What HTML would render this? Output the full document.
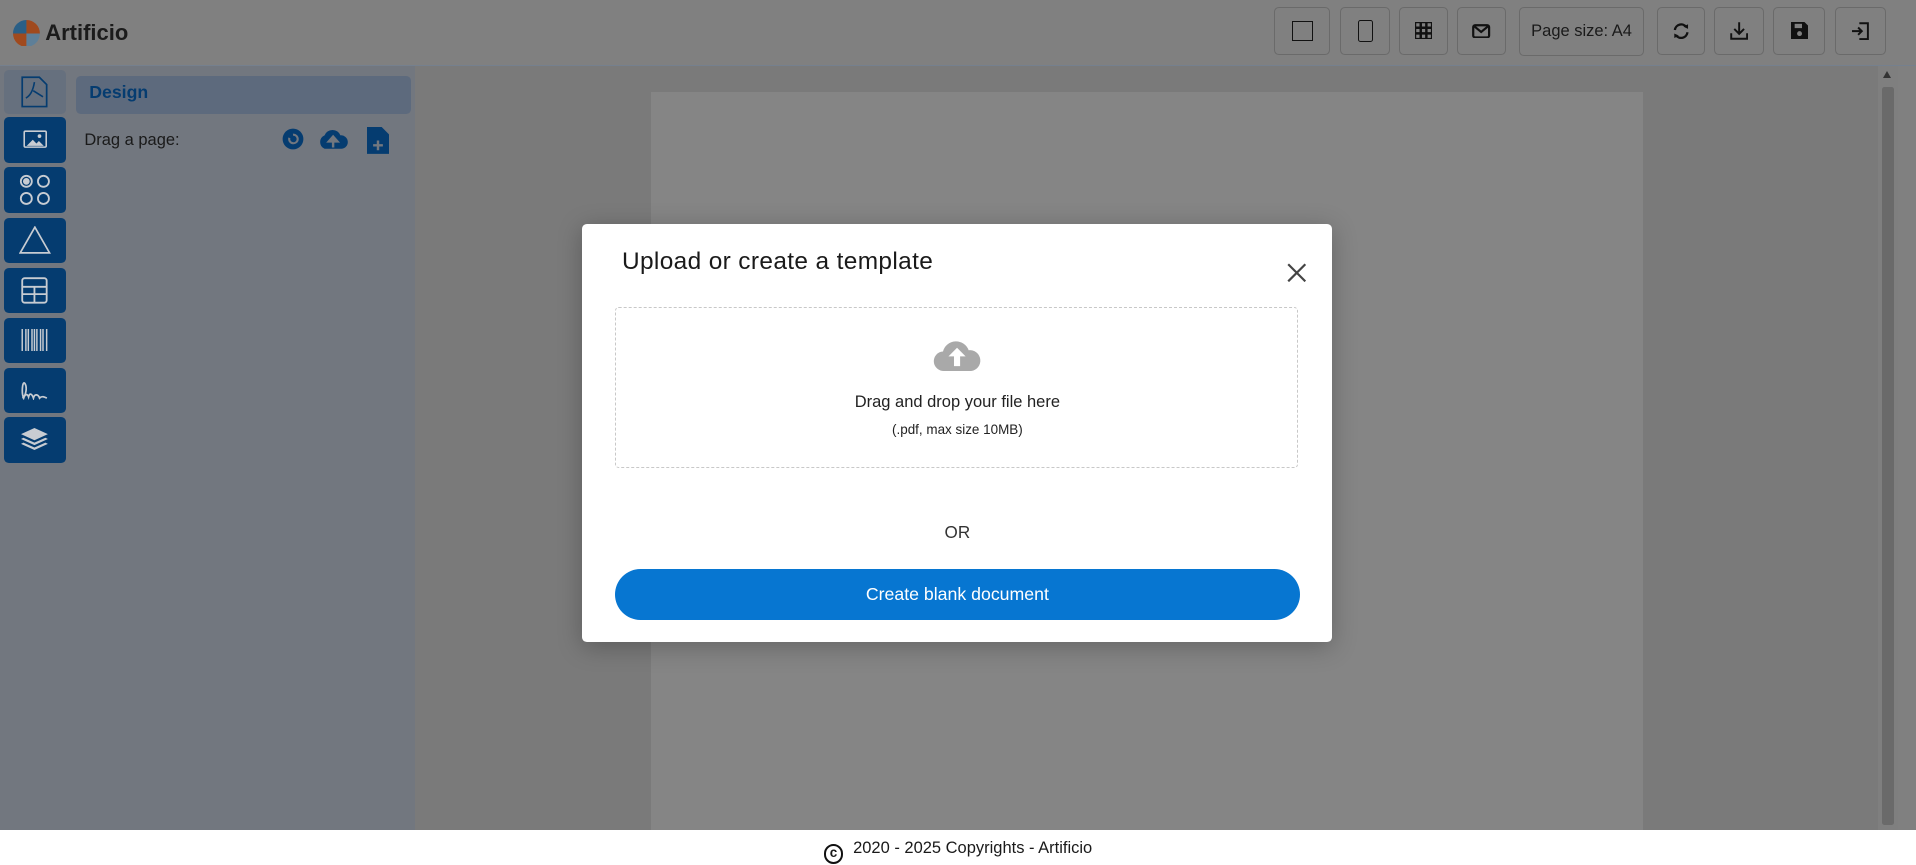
<!DOCTYPE html>
<html><head><meta charset="utf-8"><style>
html,body{margin:0;padding:0;width:1916px;height:865px;overflow:hidden;background:#fff;font-family:"Liberation Sans",sans-serif}
#w{zoom:1.22194;width:1568px;height:708px;position:relative}
.a{position:absolute}
.tb{position:absolute;top:6px;height:37px;border:1px solid #6a6a6a;border-radius:4px;background:#808080;display:flex;align-items:center;justify-content:center;color:#1a1a1a;font-size:13.5px}
.lb{position:absolute;left:3px;width:51px;height:37px;background:#053c70;border-radius:4px;display:flex;align-items:center;justify-content:center}
</style></head><body><div id="w">
<div class="a" style="left:0;top:0;width:1568px;height:53px;background:#808080;border-bottom:1px solid #75808e"></div>
<svg class="a" style="left:11px;top:16px" width="22" height="22" viewBox="0 0 22 22"><path d="M11 0A11 11 0 0 0 0 11H11Z" fill="#2a5f86"/><path d="M11 0A11 11 0 0 1 22 11H11Z" fill="#a04a1e"/><path d="M0 11A11 11 0 0 0 11 22V11Z" fill="#a04a1e"/><path d="M22 11A11 11 0 0 1 11 22V11Z" fill="#5e7f98"/></svg>
<div class="a" style="left:37px;top:16px;font-size:18px;font-weight:bold;color:#1b1b1b">Artificio</div>
<div class="tb" style="left:1043px;width:44px"><div style="width:15px;height:15px;border:1.5px solid #111"></div></div>
<div class="tb" style="left:1097px;width:39px"><div style="width:11px;height:17px;border:1.5px solid #111;border-radius:2px"></div></div>
<div class="tb" style="left:1145px;width:38px"><svg width="14" height="14"><path d="M0 0h14v14H0z M4.7 0v14 M9.3 0v14 M0 4.7h14 M0 9.3h14" stroke="#111" stroke-width="2" fill="none"/></svg></div>
<div class="tb" style="left:1192px;width:39px"><svg width="15" height="12"><rect x="1" y="1" width="13" height="10" rx="1.5" stroke="#111" stroke-width="1.8" fill="none"/><path d="M2 2l5.5 4.5L13 2" stroke="#111" stroke-width="1.8" fill="none"/></svg></div>
<div class="tb" style="left:1243px;width:101px;top:6px;height:38px">Page size: A4</div>
<div class="tb" style="left:1356px;width:38px"><svg width="15" height="15" viewBox="0 0 16 16"><path d="M2.5 7A5.5 5.5 0 0 1 12.5 4.5M13.5 9A5.5 5.5 0 0 1 3.5 11.5" stroke="#111" stroke-width="2" fill="none"/><path d="M10 4l4-2v4z M6 12l-4 2v-4z" fill="#111"/></svg></div>
<div class="tb" style="left:1403px;width:39px"><svg width="15" height="16"><path d="M7.5 1v9M3.5 6.5l4 4 4-4M1 10v4.5h13V10" stroke="#111" stroke-width="1.6" fill="none"/></svg></div>
<div class="tb" style="left:1451px;width:41px"><svg width="14" height="14"><path d="M0 0h11l3 3v11H0z" fill="#111"/><rect x="3" y="1.5" width="6" height="3.5" fill="#808080"/><circle cx="7" cy="9.5" r="2" fill="#808080"/></svg></div>
<div class="tb" style="left:1502px;width:40px"><svg width="14" height="15"><path d="M6 1h7v13H6M0 7.5h8M5 4.5l3 3-3 3" stroke="#111" stroke-width="1.6" fill="none"/></svg></div>

<div class="a" style="left:0;top:54px;width:340px;height:625px;background:#72777f"></div>
<div class="a" style="left:3px;top:57px;width:51px;height:36px;background:#66707e;border-radius:4px;display:flex;align-items:center;justify-content:center"><svg width="22" height="26"><path d="M1 1h14l6 6v18H1z" stroke="#053c70" stroke-width="1.4" fill="none"/><path d="M11 5c-1 6-3 11-7 13M10 12l8 5" stroke="#053c70" stroke-width="1.3" fill="none"/></svg></div>
<div class="a" style="left:62px;top:62px;width:274px;height:31px;background:#5d6a7d;border-radius:4px"></div>
<div class="a" style="left:73px;top:67px;font-size:14.5px;font-weight:bold;color:#053c70">Design</div>
<div class="a" style="left:69px;top:107px;font-size:13.5px;color:#1a1a1a">Drag a page:</div>
<svg class="a" style="left:231px;top:105px" width="18" height="18"><circle cx="9" cy="9" r="8.5" fill="#053c70"/><path d="M6 8a3.5 3.5 0 1 0 3-2.5" stroke="#72777f" stroke-width="1.7" fill="none"/></svg>
<svg class="a" style="left:259px;top:105px" width="28" height="18"><path d="M7 17a6 6 0 0 1 0-11 7 7 0 0 1 13 0 5 5 0 0 1 1 11z" fill="#053c70"/><path d="M14 16v-7M10.5 11l3.5-4 3.5 4z" stroke="#72777f" stroke-width="2" fill="#72777f"/></svg>
<svg class="a" style="left:300px;top:104px" width="18" height="22"><path d="M0 0h12l6 6v16H0z" fill="#053c70"/><path d="M9 11v8M5 15h8" stroke="#72777f" stroke-width="2"/></svg>

<div class="lb" style="top:96px"><svg width="20" height="16"><rect x="1" y="1" width="18" height="13" rx="1" stroke="#c8ccd2" stroke-width="1.3" fill="none"/><path d="M3 13l5-5 3 3 2-2 4 4z" fill="#c8ccd2"/><circle cx="13.5" cy="5" r="1.5" fill="#c8ccd2"/></svg></div>
<div class="lb" style="top:137px"><svg width="26" height="26" fill="none" stroke="#c8ccd2" stroke-width="1.5"><circle cx="6" cy="6" r="4.5"/><circle cx="6" cy="6" r="2" fill="#c8ccd2"/><circle cx="20" cy="6" r="4.5"/><circle cx="6" cy="20" r="4.5"/><circle cx="20" cy="20" r="4.5"/></svg></div>
<div class="lb" style="top:178px"><svg width="26" height="23"><path d="M13 1L1 22h24z" stroke="#c8ccd2" stroke-width="1.4" fill="none"/></svg></div>
<div class="lb" style="top:219px"><svg width="22" height="22"><rect x="1" y="1" width="20" height="20" rx="2" stroke="#c8ccd2" stroke-width="1.5" fill="none"/><path d="M1 8h20M1 14h20M11 8v13" stroke="#c8ccd2" stroke-width="1.5"/></svg></div>
<div class="lb" style="top:260px"><svg width="22" height="18"><path d="M1 0v18M4 0v18M6 0v18M9 0v18M11 0v18M13 0v18M16 0v18M18 0v18M21 0v18" stroke="#c8ccd2" stroke-width="1.2"/></svg></div>
<div class="lb" style="top:301px"><svg width="24" height="16"><path d="M2 14c3-2 4-9 2-12S1 10 3 14c1-3 3-4 4-1 1-4 3-2 4 1 1-4 4-3 5 0 2-2 4-1 6 0" stroke="#c8ccd2" stroke-width="1.4" fill="none"/></svg></div>
<div class="lb" style="top:341px;height:38px"><svg width="22" height="20" fill="#c8ccd2"><path d="M11 0l11 5-11 5L0 5z"/><path d="M2 8l9 4 9-4 2 1-11 5L0 9z"/><path d="M2 12l9 4 9-4 2 1-11 5L0 13z"/></svg></div>

<div class="a" style="left:340px;top:54px;width:1197px;height:625px;background:#7a7a7a"></div>
<div class="a" style="left:533px;top:75px;width:812px;height:604px;background:#858585"></div>
<div class="a" style="left:1537px;top:54px;width:16px;height:625px;background:#7f7f7f"></div>
<div class="a" style="left:1540px;top:71px;width:10px;height:604px;background:#6a6a6a;border-radius:2px"></div>
<div class="a" style="left:1541px;top:58px;width:0;height:0;border-left:4px solid transparent;border-right:4px solid transparent;border-bottom:6px solid #333"></div>
<div class="a" style="left:1553px;top:54px;width:15px;height:625px;background:#808080"></div>

<div class="a" style="left:476px;top:183px;width:614px;height:342px;background:#fff;border-radius:4px;box-shadow:0 4px 20px rgba(0,0,0,.25)"></div>
<div class="a" style="left:509px;top:203px;font-size:20px;color:#1a1a1a;letter-spacing:0.3px">Upload or create a template</div>
<svg class="a" style="left:1053px;top:215px" width="16" height="16"><path d="M1 1l14 14M15 1L1 15" stroke="#444" stroke-width="1.8"/></svg>
<div class="a" style="left:503px;top:251px;width:558px;height:130px;border:1.5px dashed #c8c8c8;border-radius:3px"></div>
<svg class="a" style="left:763px;top:277px" width="41" height="28"><path d="M10 27a8 8 0 0 1-1-16 11 11 0 0 1 21-1 8.5 8.5 0 0 1 2 17z" fill="#a9a9a9"/><path d="M20.5 8l-7 7h4.5v8h5v-8h4.5z" fill="#fff"/></svg>
<div class="a" style="left:503px;top:322px;width:561px;text-align:center;font-size:13.5px;color:#222">Drag and drop your file here</div>
<div class="a" style="left:503px;top:345px;width:561px;text-align:center;font-size:11px;color:#222">(.pdf, max size 10MB)</div>
<div class="a" style="left:503px;top:428px;width:561px;text-align:center;font-size:14px;color:#333">OR</div>
<div class="a" style="left:503px;top:466px;width:561px;height:41px;background:#0776d1;border-radius:21px;color:#fff;font-size:14.5px;display:flex;align-items:center;justify-content:center">Create blank document</div>

<div class="a" style="left:0;top:679px;width:1568px;height:29px;background:#fff"></div>
<div class="a" style="left:0;top:687px;width:1568px;text-align:center;font-size:13.5px;color:#1a1a1a"><span style="display:inline-block;width:16px;height:16px;border:2px solid #111;border-radius:50%;font-size:11px;font-weight:bold;vertical-align:-3px;margin-right:8px;box-sizing:border-box;line-height:12px">c</span>2020 - 2025 Copyrights - Artificio</div>
</div></body></html>
